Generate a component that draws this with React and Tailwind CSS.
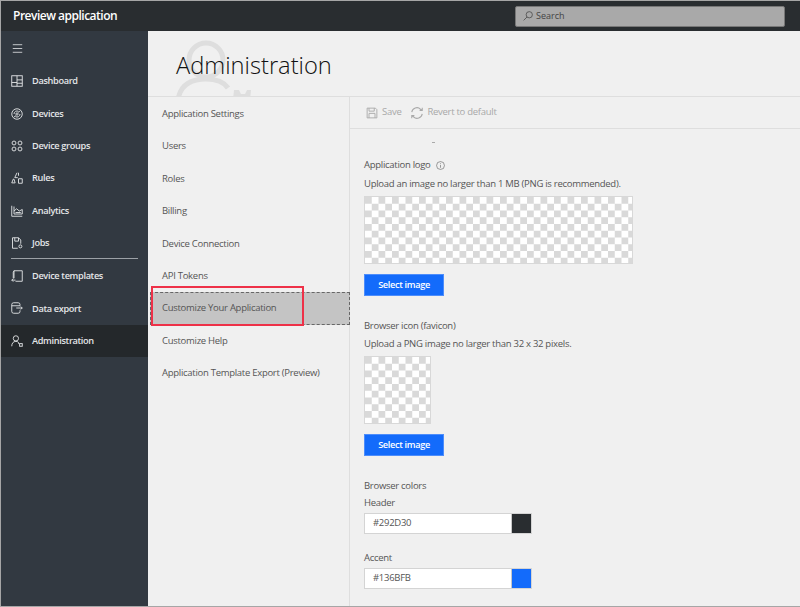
import { Menu } from 'lucide-react';

const font = { fontFamily: '"Open Sans", "Noto Sans", sans-serif' };

const Svg = ({ children, className = 'w-[12px] h-[12px]' }) => (
    <svg viewBox="0 0 16 16" fill="none" stroke="currentColor" strokeWidth="1.200" className={className}>
        {children}
    </svg>
);

const navItems = [
    { label: 'Dashboard', icon: <><rect x="1" y="1" width="14" height="14" /><path d="M1 10h7M8 1v14M8 6.500h7M8 11h7" /></> },
    { label: 'Devices', icon: <><circle cx="8" cy="8" r="7" /><circle cx="8" cy="8" r="1.500" /><path d="M4 8a4 4 0 0 1 6-3.500M12 8a4 4 0 0 1-6 3.500M10 6l2-2.500M6 10l-2 2.500" /></> },
    { label: 'Device groups', icon: <><circle cx="4" cy="4" r="2.600" /><circle cx="12" cy="4" r="2.600" /><circle cx="4" cy="12" r="2.600" /><circle cx="12" cy="12" r="2.600" /></> },
    { label: 'Rules', icon: <><path d="M8 1 5 7.500h4M10 1v4M3 9.500 1 14.500h4.500L4 9.500zM10 9h5v6h-5z" /></> },
    { label: 'Analytics', icon: <><path d="M1 1v14h14M4 2v10M4 12h11V6l-4 2-3.500-3L4 8M6 10h7" /></> },
    { label: 'Jobs', divider: true, icon: <><path d="M9 15H2V1h8l3 3v5M5 1v4.500h5V1" /><circle cx="12.500" cy="12.500" r="2" /></> },
    { label: 'Device templates', icon: <><path d="M4 11V1h11v14H6M4 1 3 3v8M1 13.500h5M3 11.500l-2 2 2 2" /></> },
    { label: 'Data export', icon: <><path d="M12 5V3.500A2.500 2.500 0 0 0 9.500 1H3.500A2.500 2.500 0 0 0 1 3.500v9A2.500 2.500 0 0 0 3.500 15h6a2.500 2.500 0 0 0 2.500-2.500V11M1 5h11M7 8h8M13 6l2 2-2 2" /></> },
    { label: 'Administration', active: true, icon: <><circle cx="6.500" cy="4.500" r="3.500" /><path d="M1 15c0-4 2-6.500 5.500-6.500S10 10 10.500 12" /><rect x="11.500" y="11.500" width="3.500" height="3.500" /></> },
];

const settings = [
    'Application Settings',
    'Users',
    'Roles',
    'Billing',
    'Device Connection',
    'API Tokens',
    'Customize Your Application',
    'Customize Help',
    'Application Template Export (Preview)',
];

const checker = 'bg-[conic-gradient(#ffffff_25%,#d9d9d9_0_50%,#ffffff_0_75%,#d9d9d9_0)] bg-[length:13.500px_13.500px]';
const text = 'text-[9.500px] tracking-[-0.280px]';

const NavItem = ({ item }) => (
    <>
        <div className={`h-[32.400px] flex items-center pl-[10px] text-[#e4e6e8] ${item.active ? 'bg-[#24282b]' : ''}`}>
            <span className="w-[21px] flex items-center"><Svg>{item.icon}</Svg></span>
            <span className="text-[9.200px] font-semibold tracking-[-0.340px]">{item.label}</span>
        </div>
        {item.divider && <div className="h-px bg-[#9ca1a6] mx-[10px] -mt-px mb-[0.500px]"></div>}
    </>
);

const SelectButton = () => (
    <div className="w-[80px] h-[22px] bg-[#136bfb] border border-[#4d8dfb] text-white text-[9.200px] font-semibold tracking-[-0.340px] flex items-center justify-center">
        Select image
    </div>
);

const ColorField = ({ label, value, swatch, className }) => (
    <div className={className}>
        <div className="text-[9.500px] leading-[14px] text-[#555]">{label}</div>
        <div className="flex mt-[3px] h-[21px] w-[168px] border border-[#d4d4d4]">
            <div className="w-[146px] bg-white text-[9.500px] text-[#555] pl-[8px] flex items-center">{value}</div>
            <div className={`flex-1 border-l border-[#c8c8c8] ${swatch}`}></div>
        </div>
    </div>
);

export default function App() {
    return (
        <div style={font} className="w-[800px] h-[607px] overflow-hidden flex flex-col bg-[#f0f0f0] border-t border-l border-b border-[#a6a6a6]">
            <header className="h-[30px] shrink-0 bg-[#292d30] flex items-center justify-between pl-[12px] pr-[15px]">
                <span className="text-white text-[12px] font-semibold tracking-[-0.500px]">Preview application</span>
                <div className="w-[270px] h-[21px] bg-[#a9a9a9] border border-[#777] rounded-[2px] flex items-center pl-[7px] gap-[3px] text-[#444]">
                    <svg viewBox="0 0 16 16" fill="none" stroke="currentColor" strokeWidth="1.200" className="w-[10px] h-[10px]">
                        <circle cx="10" cy="6" r="5" /><path d="M6.500 9.500 1 15" />
                    </svg>
                    <span className="text-[9px]">Search</span>
                </div>
            </header>

            <div className="flex flex-1 min-h-0">
                <nav className="w-[147px] shrink-0 bg-[#323941]">
                    <div className="h-[34px] flex items-center pl-[10px] text-[#e4e6e8]">
                        <Menu className="w-[13px] h-[13px]" strokeWidth={1.500} />
                    </div>
                    {navItems.map((item) => <NavItem key={item.label} item={item} />)}
                </nav>

                <main className="flex-1 min-w-0 flex flex-col">
                    <div className="relative h-[66px] shrink-0 border-b border-[#dedede] overflow-hidden pl-[28px] pt-[16px]">
                        <svg viewBox="0 0 100 66" fill="none" stroke="#dedede" strokeWidth="5" className="absolute left-[22px] top-[3px] w-[100px] h-[66px]">
                            <circle cx="36" cy="26" r="17" />
                            <path d="M8 66C10 52 20 45 36 45c10 0 18 3 22 9" />
                            <path d="M63 66 64 56h5l2 4h4l2-4h4l-1 10z" fill="#dedede" stroke="none" />
                        </svg>
                        <h1 className="relative text-[23.700px] leading-[36px] font-light text-[#111]">Administration</h1>
                    </div>

                    <div className="flex flex-1 min-h-0">
                        <div className="relative w-[202px] shrink-0 border-r border-[#dedede] pt-[1px]">
                            {settings.map((label) => (
                                label === 'Customize Your Application' ? (
                                    <div key={label} className={`h-[32.400px] flex items-center bg-[#c4c4c4] border border-dashed border-[#666] ml-[2px] pl-[11px] -mr-px text-[#555] ${text}`}>
                                        {label}
                                    </div>
                                ) : (
                                    <div key={label} className={`h-[32.400px] flex items-center pl-[14px] text-[#555] ${text}`}>
                                        {label}
                                    </div>
                                )
                            ))}
                            <div className="absolute left-[3px] top-[189px] w-[153px] h-[40px] border-2 border-[#ee3148] pointer-events-none"></div>
                        </div>

                        <div className="flex-1 min-w-0 flex flex-col">
                            <div className={`h-[32px] shrink-0 border-b border-[#dedede] flex items-center pl-[16px] text-[#a8a8a8] ${text}`}>
                                <Svg>
                                    <path d="M1.500 1.500h11l2 2v11h-13zM4 1.500v4h7v-4M4 14.500v-6h8v6" />
                                </Svg>
                                <span className="ml-[4px]">Save</span>
                                <Svg className="w-[14px] h-[14px] ml-[9px]">
                                    <path d="M2 7a6 6 0 0 1 10-3.500L14 5M14 9a6 6 0 0 1-10 3.500L2 11M14 2v3h-3M2 14v-3h3" />
                                </Svg>
                                <span className="ml-[3px]">Revert to default</span>
                            </div>

                            <div className={`flex-1 min-h-0 overflow-hidden pl-[14px] pt-[13px] text-[#555] ${text}`}>
                                <div className="w-[3px] h-px bg-[#aaa] ml-[68px]"></div>
                                <div className="flex items-center gap-[5px] h-[14px] mt-[15px]">
                                    Application logo
                                    <svg viewBox="0 0 16 16" fill="none" stroke="currentColor" className="w-[9px] h-[9px]">
                                        <circle cx="8" cy="8" r="7" /><path d="M8 7v5M8 4v1.500" />
                                    </svg>
                                </div>
                                <div className="h-[14px] mt-[5px] leading-[14px]">Upload an image no larger than 1 MB (PNG is recommended).</div>
                                <div className={`w-[269px] h-[68px] mt-[5px] border border-[#d8d8d8] ${checker}`}></div>
                                <div className="mt-[10px]"><SelectButton /></div>

                                <div className="h-[14px] mt-[23px] leading-[14px]">Browser icon (favicon)</div>
                                <div className="h-[14px] mt-[4px] leading-[14px]">Upload a PNG image no larger than 32 x 32 pixels.</div>
                                <div className={`w-[67px] h-[68px] mt-[5px] border border-[#d8d8d8] ${checker}`}></div>
                                <div className="mt-[10px]"><SelectButton /></div>

                                <div className="h-[14px] mt-[23px] leading-[14px]">Browser colors</div>
                                <ColorField label="Header" value="#292D30" swatch="bg-[#292d30]" className="mt-[3px]" />
                                <ColorField label="Accent" value="#136BFB" swatch="bg-[#136bfb]" className="mt-[17px]" />
                            </div>
                        </div>
                    </div>
                </main>
            </div>
        </div>
    );
}
